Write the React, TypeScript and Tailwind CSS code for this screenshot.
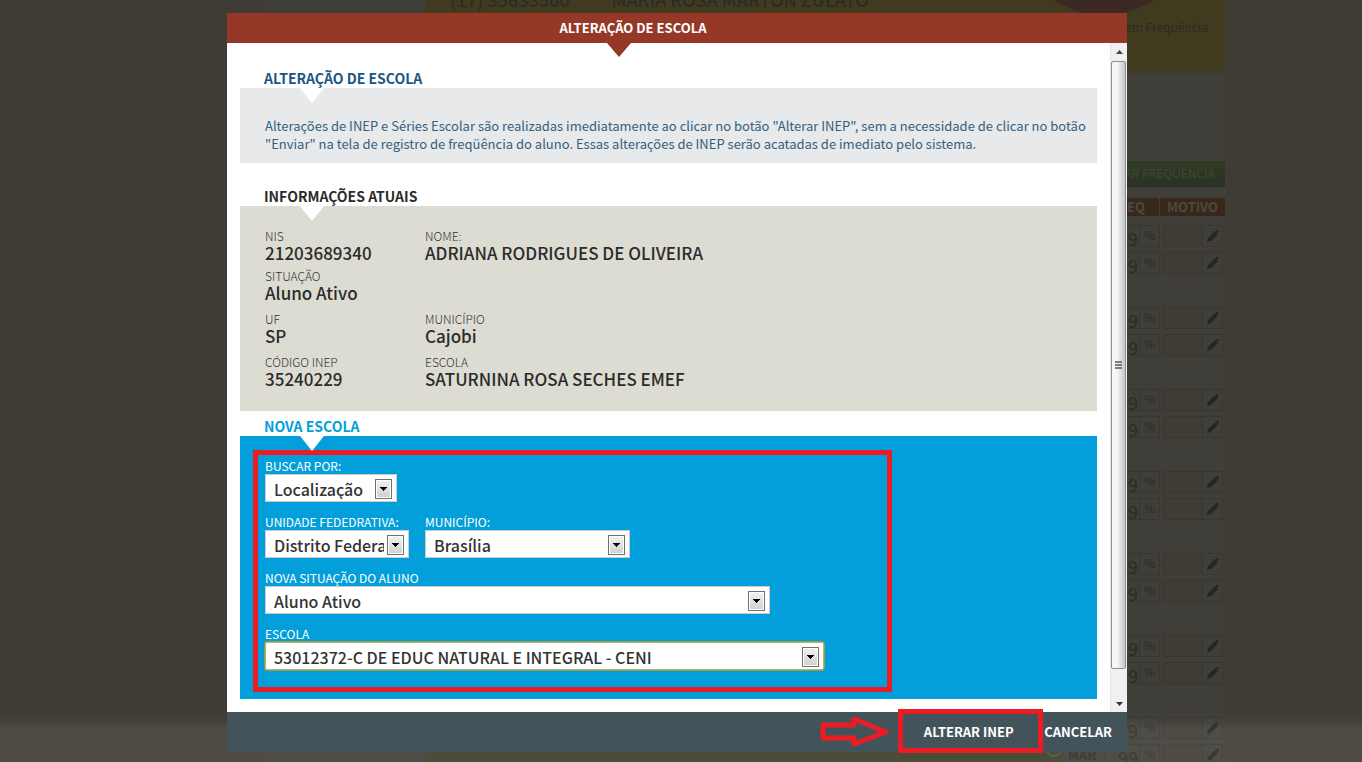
import React, { useState } from "react";

const months = [0, 1, 2, 3, 4, 5, 6];

const Pencil = () => (
  <svg width="14" height="14" viewBox="0 0 14 14" fill="#262621" aria-hidden="true">
    <path d="M1 13l1-4 7-7 3 3-7 7z" />
    <path d="M10 1.4c.8-.8 1.6-.8 2.3-.1s.8 1.500 0 2.300l-.5.5-2.300-2.200z" />
  </svg>
);

const FrequencyRow = ({ month }: { month?: string }) => (
  <tr className="h-[27px]">
    <td className={month ? "w-[20px] bg-[#3b3d28] p-0" : "w-[20px] p-0"}>
      {month && <span className="mx-auto -mt-3 block h-4 w-4 rounded-full border-2 border-[#4c4d42]" />}
    </td>
    <td className="w-[40px] p-0 pl-1 text-[13px] font-bold">{month}</td>
    <td className="p-0 pr-[3px]">
      <div className="ml-auto flex h-[22px] w-[56px] border border-[#37362f]">
        <span className="flex-1 overflow-hidden pr-px text-right text-[18px] leading-6 text-[#2d2b26]">
          99
        </span>
        <span className="w-5 border-l border-[#37362f] text-center text-[12px] leading-[18px]">
          %
        </span>
      </div>
    </td>
    <td className="w-[65px] p-0">
      <div className="ml-[3px] flex h-[22px] w-[60px] border border-[#37362f]">
        <span className="flex-1 bg-[#403c34]" />
        <span className="flex w-5 items-center justify-center border-l border-[#37362f]">
          <Pencil />
        </span>
      </div>
    </td>
  </tr>
);

const Background = () => (
  <div className="absolute inset-0 overflow-hidden bg-[#3f3c35]" aria-hidden="true">
    <div className="mx-auto h-full max-w-[1088px] pl-32">
      <div className="relative flex h-full flex-col bg-[#3f3e38] pl-40 text-[#2c2b26]">
        <div className="relative h-[73px] shrink-0 overflow-hidden bg-[#403b1f]">
          <div className="flex gap-[42px] pl-[25px] text-[18px] font-medium leading-4 -mt-[9px]">
            <span>(17) 35633500</span>
            <span>MARIA ROSA MARTON ZULATO</span>
          </div>
          <svg className="absolute -top-[165px] right-[31px]" width="180" height="180">
            <circle cx="90" cy="90" r="90" fill="#3c2824" />
          </svg>
          <p className="pr-[17px] pt-[11px] text-right text-[12px] leading-[18px]">Sem Frequência</p>
        </div>
        <div className="mt-[88px] flex shrink-0 justify-end">
          <div className="h-[26px] bg-gradient-to-b from-[#2f3a23] to-[#2b3123] px-[10px] text-[12px] leading-6 text-[#40463a]">
            AR FREQUÊNCIA
          </div>
        </div>
        <div className="mt-[11px] flex shrink-0 justify-end gap-px text-center text-[13px] font-bold leading-[18px] text-[#4b4940]">
          <span className="w-[116px] bg-[#38281b] pr-[14px] text-right">FREQ</span>
          <span className="w-[65px] bg-[#38281b]">MOTIVO</span>
        </div>
        <div className="flex flex-col gap-7 pt-[6px]">
          {months.map((group) => (
            <div key={group} className="flex">
              <div className={group === 6 ? "mt-[17px] flex-1 bg-[#3b3d28]" : "flex-1"} />
              <table className="w-[181px] table-fixed border-collapse">
                <tbody>
                  <FrequencyRow />
                  <FrequencyRow month={group === 6 ? "MAR" : undefined} />
                </tbody>
              </table>
            </div>
          ))}
        </div>
      </div>
    </div>
    <div className="absolute inset-x-0 bottom-0 h-[46px] bg-gradient-to-b from-transparent via-[#fff]/8 via-30% to-[#fff]/8" />
  </div>
);

const Section = ({
  title,
  titleColor,
  className,
  children,
}: {
  title: string;
  titleColor: string;
  className: string;
  children: React.ReactNode;
}) => (
  <section>
    <h2 className={`pl-6 text-[14px] font-bold leading-5 ${titleColor}`}>{title}</h2>
    <div className={`relative ${className}`}>
      <svg className="absolute left-[60px] top-0" width="24" height="15" aria-hidden="true">
        <path d="M0 0h24L12 15z" fill="#fff" />
      </svg>
      {children}
    </div>
  </section>
);

const Info = ({ label, value }: { label: string; value: string }) => (
  <div>
    <dt className="text-[12px] font-light leading-4 text-[#333]">{label}</dt>
    <dd className="text-[17px] font-medium leading-[17px] text-[#2b2b2b]">{value}</dd>
  </div>
);

const SelectField = ({
  id,
  label,
  options,
  width,
  focused,
}: {
  id: string;
  label: string;
  options: string[];
  width: string;
  focused?: boolean;
}) => {
  const [value, setValue] = useState(options[0]);

  return (
    <div className={width}>
      <label htmlFor={id} className="block whitespace-nowrap text-[12px] leading-4 text-white">
        {label}
      </label>
      <div className="relative">
        <select
          id={id}
          value={value}
          onChange={(e) => setValue(e.target.value)}
          className={`block h-7 w-full appearance-none border bg-white pl-2 pr-6 pt-[2px] text-[16px] font-medium leading-5 text-[#333] outline-none ${
            focused ? "rounded-[2px] border-[#c9b05c] ring-1 ring-[#8d9d59]" : "border-[#ccc]"
          }`}
        >
          {options.map((option) => (
            <option key={option}>{option}</option>
          ))}
        </select>
        <span className="pointer-events-none absolute right-[5px] top-[5px] flex h-5 w-[17px] items-center justify-center border border-[#707070] bg-gradient-to-b from-[#f2f2f2] to-[#cfcfcf] ring-1 ring-inset ring-white">
          <svg width="7" height="4" aria-hidden="true">
            <path d="M0 0h7v1H6v1H5v1H4v1H3V3H2V2H1V1H0z" fill="#000" />
          </svg>
        </span>
      </div>
    </div>
  );
};

const ScrollBar = () => (
  <div className="flex w-[17px] shrink-0 flex-col border-l border-[#e6e6e6] bg-[#f0f0f0]" aria-hidden="true">
    <div className="flex h-[18px] items-center justify-center">
      <svg width="7" height="4">
        <path d="M0 4L3.500 0 7 4z" fill="#444" />
      </svg>
    </div>
    <div className="mr-px flex flex-1 items-center justify-center rounded-[2px] border border-[#8f8f8f] bg-gradient-to-r from-[#f6f6f6] from-40% to-[#c4c4ca]">
      <svg width="7" height="8">
        <path d="M0 1h7M0 4h7M0 7h7" stroke="#555" strokeWidth="1.500" />
      </svg>
    </div>
    <div className="flex h-[43px] items-end justify-center pb-[6px]">
      <svg width="7" height="4">
        <path d="M0 0h7L3.500 4z" fill="#333" />
      </svg>
    </div>
  </div>
);

const App = () => {
  return (
    <div
      className="relative h-screen overflow-hidden"
      style={{ fontFamily: '"Noto Sans CJK JP", "Open Sans", sans-serif' }}
    >
      <Background />

      <div className="relative flex h-full justify-center pb-[10px] pr-2 pt-[13px]">
        <div role="dialog" aria-labelledby="title" className="flex w-full max-w-[900px] flex-col bg-white">
          <header className="relative shrink-0 bg-[#953828] pr-[88px] text-center">
            <h1 id="title" className="text-[13px] font-bold leading-[30px] text-white">
              ALTERAÇÃO DE ESCOLA
            </h1>
            <svg className="absolute left-[380px] top-full" width="24" height="14" aria-hidden="true">
              <path d="M0 0h24L12 14z" fill="#953828" />
            </svg>
          </header>

          <div className="flex min-h-0 flex-1">
            <div className="min-w-0 flex-1 overflow-hidden px-[13px] pt-[25px]">
              <Section title="ALTERAÇÃO DE ESCOLA" titleColor="text-[#1c5580]" className="bg-[#e7e9ea] pb-[10px] pl-[25px] pr-1 pt-[29px]">
                <p className="text-[13px] leading-[18px] text-[#36607f]">
                  Alterações de INEP e Séries Escolar são realizadas imediatamente ao clicar no botão
                  "Alterar INEP", sem a necessidade de clicar no botão "Enviar" na tela de registro de
                  freqüência do aluno. Essas alterações de INEP serão acatadas de imediato pelo sistema.
                </p>
              </Section>

              <div className="h-[23px]" />

              <Section title="INFORMAÇÕES ATUAIS" titleColor="text-[#2b2b2b]" className="bg-[#dddcd2] px-[25px] pb-6 pt-[22px]">
                <dl className="grid grid-cols-[160px_1fr] gap-y-[10px]">
                  <div className="col-span-2 grid grid-cols-[160px_1fr] gap-y-[7px]">
                    <Info label="NIS" value="21203689340" />
                    <Info label="NOME:" value="ADRIANA RODRIGUES DE OLIVEIRA" />
                    <Info label="SITUAÇÃO" value="Aluno Ativo" />
                  </div>
                  <Info label="UF" value="SP" />
                  <Info label="MUNICÍPIO" value="Cajobi" />
                  <Info label="CÓDIGO INEP" value="35240229" />
                  <Info label="ESCOLA" value="SATURNINA ROSA SECHES EMEF" />
                </dl>
              </Section>

              <div className="h-[5px]" />

              <Section title="NOVA ESCOLA" titleColor="text-[#029fda]" className="bg-[#029fda] px-[13px] pb-[7px] pt-[14px]">
                <form className="flex max-w-[639px] flex-col gap-3 border-[5px] border-[#ed1c24] px-[7px] pb-[17px] pt-[3px]">
                  <SelectField id="buscar" label="BUSCAR POR:" options={["Localização"]} width="w-[132px]" />
                  <div className="flex gap-4">
                    <SelectField id="uf" label="UNIDADE FEDEDRATIVA:" options={["Distrito Federal"]} width="w-36" />
                    <SelectField id="municipio" label="MUNICÍPIO:" options={["Brasília"]} width="w-[205px]" />
                  </div>
                  <SelectField id="situacao" label="NOVA SITUAÇÃO DO ALUNO" options={["Aluno Ativo"]} width="w-[505px]" />
                  <SelectField
                    id="escola"
                    label="ESCOLA"
                    options={["53012372-C DE EDUC NATURAL E INTEGRAL - CENI"]}
                    width="w-[559px]"
                    focused
                  />
                </form>
              </Section>
            </div>
            <ScrollBar />
          </div>

          <footer className="flex h-10 shrink-0 items-center justify-end bg-[#42545a] pr-[15px] text-[13px] font-bold text-white">
            <svg className="mr-[9px]" width="69" height="32" viewBox="0 0 69 32" aria-hidden="true">
              <path
                d="M3 9h31V3l32 13-32 12v-6H3z"
                fill="none"
                stroke="#ed1c24"
                strokeWidth="5"
                strokeLinejoin="round"
              />
            </svg>
            <button type="button" className="relative h-10 w-[145px] pr-1">
              ALTERAR INEP
              <span className="absolute inset-x-0 -bottom-px -top-[3px] border-[5px] border-[#ed1c24]" />
            </button>
            <button type="button" className="h-10 pl-px">
              CANCELAR
            </button>
          </footer>
        </div>
      </div>
    </div>
  );
};

export default App;
